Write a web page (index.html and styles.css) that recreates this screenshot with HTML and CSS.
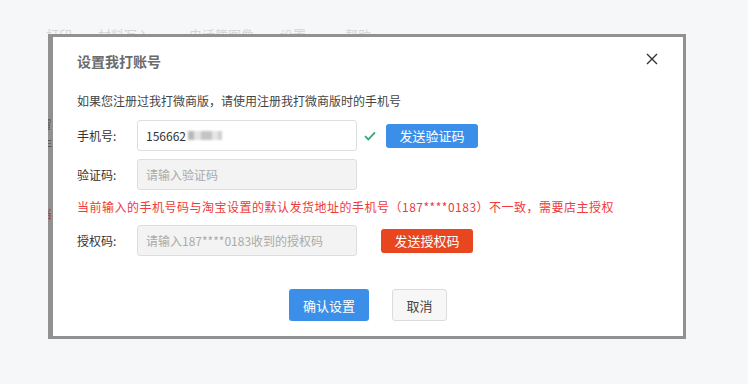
FILE: index.html
```html
<!DOCTYPE html>
<html lang="zh-CN">
<head>
<meta charset="utf-8">
<title>设置我打账号</title>
<link rel="stylesheet" href="styles.css">
</head>
<body>
<div class="page">
  <div class="under-nav"><span>打印</span><span>材料写入一</span><span>电话簿图像</span><span>设置一</span><span>帮助</span></div>
  <div class="mask">
    <div class="under-left"><span>冒</span><span>非</span><span class="red">当</span></div>
    <div class="modal">
      <div class="modal-header">
        <div class="modal-title">设置我打账号</div>
        <svg class="close" width="12" height="12" viewBox="0 0 12 12"><path d="M1 1L11 11M11 1L1 11" stroke="#333" stroke-width="1.4" fill="none"/></svg>
      </div>
      <div class="modal-body">
        <p class="desc">如果您注册过我打微商版，请使用注册我打微商版时的手机号</p>
        <div class="row row-phone">
          <label class="label">手机号:</label>
          <div class="input"><span class="val">156662</span><span class="blur"></span></div>
          <svg class="check" width="12" height="10" viewBox="0 0 12 10"><path d="M1 5.2L4.3 8.4L11 1.4" stroke="#3aa876" stroke-width="1.8" fill="none"/></svg>
          <button class="btn btn-blue btn-sm">发送验证码</button>
        </div>
        <div class="row row-code">
          <label class="label">验证码:</label>
          <div class="input input-disabled"><span class="ph">请输入验证码</span></div>
        </div>
        <p class="warn">当前输入的手机号码与淘宝设置的默认发货地址的手机号（187****0183）不一致，需要店主授权</p>
        <div class="row row-auth">
          <label class="label">授权码:</label>
          <div class="input input-disabled"><span class="ph">请输入187****0183收到的授权码</span></div>
          <button class="btn btn-red btn-sm">发送授权码</button>
        </div>
      </div>
      <div class="modal-footer">
        <button class="btn btn-blue btn-lg">确认设置</button>
        <button class="btn btn-gray btn-lg">取消</button>
      </div>
    </div>
  </div>
</div>
</body>
</html>
```

FILE: styles.css
```css
* { box-sizing: border-box; }
html, body { margin: 0; padding: 0; }
body {
  background: #f6f7f9;
  font-family: "Noto Sans CJK SC", "Liberation Sans", sans-serif;
  color: #333;
  width: 748px;
  height: 384px;
  overflow: hidden;
}
.page {
  position: relative;
  padding: 34px 0 0 48px;
}
.under-nav {
  position: absolute;
  left: 46px;
  top: 25px;
  height: 9px;
  overflow: hidden;
  font-size: 13px;
  line-height: 20px;
  color: #d3d6db;
  display: flex;
  gap: 26px;
  white-space: nowrap;
}
.mask {
  position: relative;
  width: 638px;
  height: 305px;
  background: #919191;
  padding: 3px 3px 3px 5px;
}
.under-left {
  position: absolute;
  left: 0;
  top: 80px;
  width: 5px;
  display: flex;
  flex-direction: column;
  font-size: 12px;
  line-height: 20px;
  color: #3f3f3f;
  opacity: 0.7;
  overflow: hidden;
}
.under-left span { margin-left: -8px; }
.under-left .red { color: #b0202a; margin-top: 50px; }
.modal {
  position: relative;
  background: #fff;
  width: 630px;
  height: 299px;
  display: flex;
  flex-direction: column;
}
.modal-header {
  height: 44px;
  padding: 14px 25px 0 24px;
  display: flex;
  justify-content: space-between;
}
.modal-title {
  font-size: 14px;
  line-height: 20px;
  font-weight: bold;
  color: #6b6b6b;
}
.close { margin-top: 2px; }
.modal-body {
  padding: 10px 24px 0 24px;
}
.desc {
  margin: 0;
  font-size: 12px;
  line-height: 20px;
  color: #444;
}
.row {
  display: flex;
  align-items: center;
  height: 31px;
}
.row-phone { margin-top: 9px; }
.row-code { margin-top: 8px; }
.row-auth { margin-top: 8px; }
.label {
  width: 60px;
  font-size: 12px;
  color: #333;
}
.input {
  width: 220px;
  height: 31px;
  border: 1px solid #dcdee2;
  border-radius: 3px;
  padding: 0 8px;
  display: flex;
  align-items: center;
  font-size: 12px;
  background: #fff;
}
.input-disabled { background: #f3f3f3; }
.val { color: #333; }
.blur {
  display: inline-block;
  width: 34px;
  height: 9px;
  margin-left: 2px;
  background: linear-gradient(90deg, #b8b8b8 0 18%, #e4e4e4 18% 38%, #c4c4c4 38% 70%, #e6e6e6 70% 88%, #cfcfcf 88%);
  filter: blur(1.2px);
}
.ph { color: #aaa; }
.check { margin-left: 7px; }
.btn {
  border: none;
  font-family: inherit;
  padding: 0;
  cursor: pointer;
}
.btn-sm {
  height: 24px;
  width: 92px;
  border-radius: 3px;
  font-size: 13px;
  color: #fff;
}
.row-phone .btn-sm { margin-left: 10px; }
.row-auth .btn-sm { margin-left: 24px; }
.btn-blue { background: #3b8fe9; color: #fff; }
.btn-red { background: #e8461f; color: #fff; }
.warn {
  margin: 7px 0 0 0;
  font-size: 12px;
  line-height: 20px;
  color: #ee3a3a;
  letter-spacing: 0.5px;
}
.modal-footer {
  margin-top: 33px;
  display: flex;
  justify-content: center;
  gap: 23px;
}
.btn-lg {
  height: 32px;
  border-radius: 3px;
  font-size: 13px;
}
.modal-footer .btn-blue { width: 80px; }
.btn-gray {
  width: 55px;
  background: #f7f7f7;
  border: 1px solid #dcdcdc;
  color: #444;
}
```
